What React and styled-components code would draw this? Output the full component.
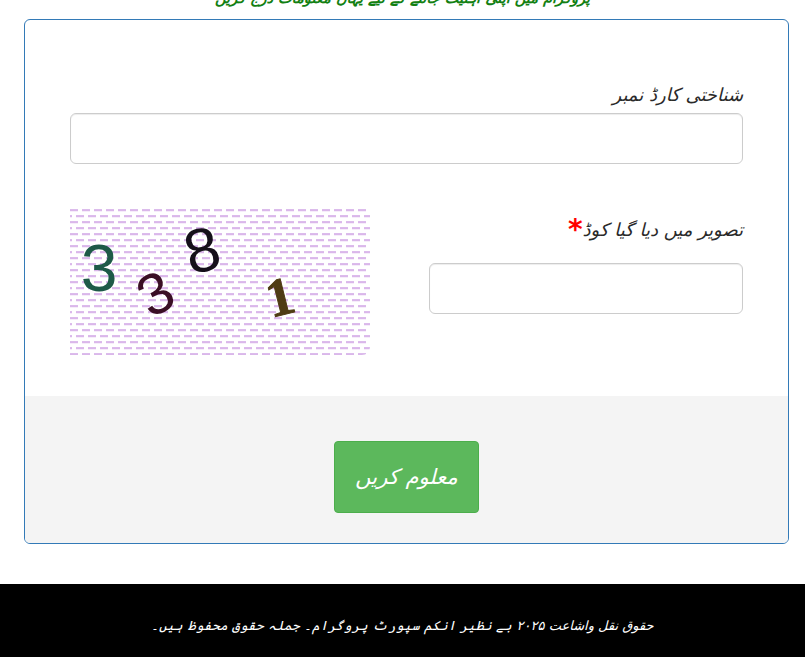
import React from "react";
import styled, { createGlobalStyle } from "styled-components";

const Global = createGlobalStyle`
  html, body { margin: 0; padding: 0; background: #fff; }
  body { font-family: "DejaVu Sans", "Noto Sans", sans-serif; direction: rtl; }
`;

const Page = styled.div`
  width: 805px;
  height: 657px;
  overflow: hidden;
  display: flex;
  flex-direction: column;
`;

const HeadingClip = styled.div`
  height: 19px;
  overflow: hidden;
`;

const Heading = styled.h2`
  margin: -16px 0 0;
  height: 28px;
  line-height: 28px;
  font-size: 14.5px;
  font-weight: 700;
  font-style: oblique;
  color: #128012;
  text-align: center;
`;

const Card = styled.section`
  margin: 0 16px 0 24px;
  height: 525px;
  box-sizing: border-box;
  border: 1px solid #337ab7;
  border-radius: 6px;
  display: flex;
  flex-direction: column;
  overflow: hidden;
  background: #fff;
`;

const CardBody = styled.div`
  flex: 1;
  padding: 51px 45px 0;
  display: flex;
  flex-direction: column;
`;

const Label = styled.label`
  display: block;
  font-size: 18px;
  font-style: oblique;
  line-height: 48px;
  height: 42px;
  color: #2a2a2a;
`;

const CaptchaLabel = styled(Label)`
  line-height: 42px;
  height: 54px;
`;

const Field = styled.div`
  display: flex;
  flex-direction: column;
`;

const Input = styled.input`
  display: block;
  width: 100%;
  height: 51px;
  box-sizing: border-box;
  border: 1px solid #ccc;
  border-radius: 6px;
  background: #fff;
  box-shadow: inset 0 1px 1px rgba(0, 0, 0, 0.075);
  position: relative;
`;

const CaptchaRow = styled.div`
  margin-top: 45px;
  display: grid;
  grid-template-columns: 314px 300px;
  justify-content: space-between;
  align-items: start;
`;

const Required = styled.span`
  color: #f00;
  font-size: 28px;
  font-weight: 700;
  font-style: normal;
  vertical-align: -3px;
  line-height: 1;
`;

const Captcha = styled.svg`
  display: block;
  width: 300px;
  height: 146px;
  border-radius: 0 0 8px 0;
`;

const CardFooter = styled.div`
  height: 147px;
  background: #f4f4f4;
  display: flex;
  justify-content: center;
  padding-top: 45px;
  box-sizing: border-box;
`;

const SubmitButton = styled.button`
  width: 145px;
  height: 72px;
  box-sizing: border-box;
  background: #5cb85c;
  border: 1px solid #4cae4c;
  border-radius: 4px;
  color: #fff;
  font-family: inherit;
  font-size: 21px;
  font-style: oblique;
  padding: 0;
`;

const Footer = styled.footer`
  margin-top: 40px;
  flex: 1;
  background: #000;
  color: #fff;
  display: flex;
  align-items: center;
  justify-content: center;
  font-size: 13px;
  font-style: oblique;
  padding-top: 9px;
`;

const digit = {
  textAnchor: "middle",
  dominantBaseline: "central",
};

const CaptchaImage = () => (
  <Captcha viewBox="0 0 300 146" xmlns="http://www.w3.org/2000/svg" direction="ltr">
    <defs>
      <pattern id="dashes" width="12" height="12" y="0.4" patternUnits="userSpaceOnUse">
        <rect x="0" y="0" width="8" height="1.4" fill="#c58fdf" />
        <rect x="6" y="6" width="8" height="1.4" fill="#c58fdf" />
        <rect x="-6" y="6" width="8" height="1.4" fill="#c58fdf" />
      </pattern>
    </defs>
    <rect width="300" height="146" fill="#fff" />
    <rect width="300" height="146" fill="url(#dashes)" />
    <text {...digit} fontFamily="Liberation Sans" fontSize="66" fill="#1e5a48" transform="translate(29 59)">3</text>
    <text {...digit} fontFamily="Liberation Sans" fontSize="58" fill="#3a0f25" transform="translate(85 84) rotate(-28)">3</text>
    <text {...digit} fontFamily="Liberation Sans" fontSize="62" fill="#15101a" transform="translate(132 41) rotate(-14)">8</text>
    <text {...digit} fontFamily="Liberation Serif" fontWeight="700" fontSize="54" stroke="#4f3c14" strokeWidth="1" fill="#4f3c14" transform="translate(210 88) rotate(-14)">1</text>
  </Captcha>
);

export default function App() {
  return (
    <Page>
      <Global />
      <HeadingClip>
        <Heading>پروگرام میں اپنی اہلیت جاننے کے لیے یہاں معلومات درج کریں</Heading>
      </HeadingClip>
      <Card>
        <CardBody>
          <Field>
            <Label>شناختی کارڈ نمبر</Label>
            <Input type="text" />
          </Field>
          <CaptchaRow>
            <Field>
              <CaptchaLabel>
                تصویر میں دیا گیا کوڈ<Required>*</Required>
              </CaptchaLabel>
              <Input type="text" />
            </Field>
            <CaptchaImage />
          </CaptchaRow>
        </CardBody>
        <CardFooter>
          <SubmitButton type="button">معلوم کریں</SubmitButton>
        </CardFooter>
      </Card>
      <Footer>حقوق نقل واشاعت ۲۰۲۵ بے نظیر انکم سپورٹ پروگرام۔ جملہ حقوق محفوظ ہیں۔</Footer>
    </Page>
  );
}
